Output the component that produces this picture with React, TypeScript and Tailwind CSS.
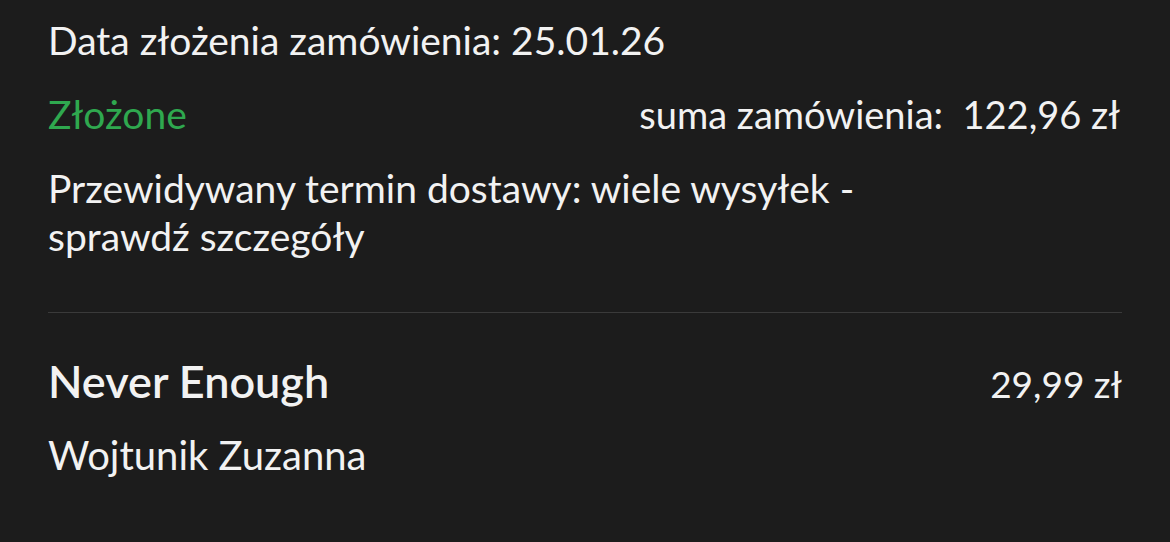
export default function App() {
  return (
    <div className="min-h-[542px] w-full bg-[#1c1c1c] px-12 text-[#f2f2f2] font-['Lato',sans-serif]">
      <section className="flex flex-col pr-[2px]">
        <p className="mt-[16px] text-[39px] leading-[48px]">Data złożenia zamówienia: 25.01.26</p>

        <div className="mt-[26px] flex items-baseline justify-between text-[39px] leading-[48px]">
          <span className="text-[#2fa84f]">Złożone</span>
          <span className="text-[38px]">suma zamówienia:&nbsp; 122,96 zł</span>
        </div>

        <p className="mt-[26px] max-w-[880px] text-[39px] leading-[48px]">
          Przewidywany termin dostawy: wiele wysyłek - sprawdź szczegóły
        </p>
      </section>

      <hr className="mt-[52px] border-t border-[#3a3a3a]" />

      <section className="flex flex-col">
        <div className="mt-[40px] flex items-baseline justify-between">
          <span className="text-[45px] font-semibold leading-[56px]">Never Enough</span>
          <span className="text-[37px] leading-[48px]">29,99 zł</span>
        </div>
        <p className="mt-[22px] text-[40px] leading-[48px]">Wojtunik Zuzanna</p>
      </section>
    </div>
  )
}
